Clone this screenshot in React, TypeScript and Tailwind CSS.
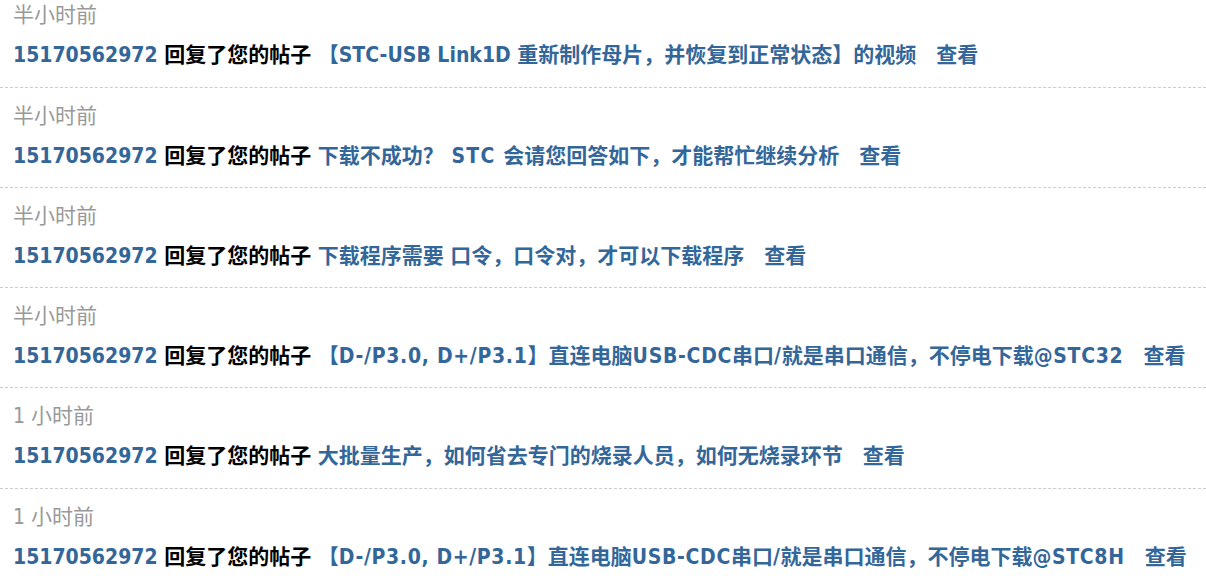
import React from "react";

type Item = { time: string; title: string; track: string };

const items: Item[] = [
  { time: "半小时前", title: "【STC-USB Link1D 重新制作母片，并恢复到正常状态】的视频", track: "" },
  { time: "半小时前", title: "下载不成功？ STC 会请您回答如下，才能帮忙继续分析", track: "tracking-[1.2px]" },
  { time: "半小时前", title: "下载程序需要 口令，口令对，才可以下载程序", track: "" },
  { time: "半小时前", title: "【D-/P3.0, D+/P3.1】直连电脑USB-CDC串口/就是串口通信，不停电下载@STC32", track: "tracking-[0.7px]" },
  { time: "1 小时前", title: "大批量生产，如何省去专门的烧录人员，如何无烧录环节", track: "" },
  { time: "1 小时前", title: "【D-/P3.0, D+/P3.1】直连电脑USB-CDC串口/就是串口通信，不停电下载@STC8H", track: "tracking-[0.65px]" },
];

function Title({ text, track }: { text: string; track: string }) {
  const parts = text.split(/([\x20-\x7E]+)/).filter((p) => p.length > 0);
  return (
    <span className="text-[#336699]">
      {parts.map((p, i) =>
        /^[\x20-\x7E]+$/.test(p) ? (
          <span key={i} className={track}>
            {p}
          </span>
        ) : (
          <span key={i}>{p}</span>
        )
      )}
    </span>
  );
}

export default function App() {
  return (
    <div
      className="w-[1206px] h-[582px] overflow-hidden bg-white text-[21px]"
      style={{ fontFamily: '"DejaVu Sans Condensed", "Noto Sans CJK SC", sans-serif' }}
    >
      {items.map((it, i) => (
        <div
          key={i}
          className={`${i === 0 ? "pt-0 h-[87.5px]" : "pt-[13px] h-[100.25px]"} pl-[13px] border-b border-dashed border-[#cccccc]`}
        >
          <div className="h-[30px] leading-[30px] text-[#999999] whitespace-nowrap">{it.time}</div>
          <div className="mt-[10px] h-[30px] leading-[30px] font-bold whitespace-nowrap">
            <span className="text-[#336699]">15170562972</span>{" "}
            <span className="text-black">回复了您的帖子</span>{" "}
            <Title text={it.title} track={it.track} />
            <span className="text-[#336699] ml-[20px]">查看</span>
          </div>
        </div>
      ))}
    </div>
  );
}
